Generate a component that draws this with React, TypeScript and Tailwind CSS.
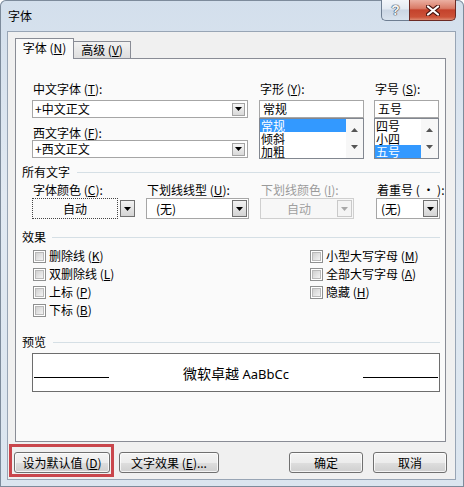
import React from "react";

const FONT = "font-['Noto_Sans_CJK_SC','Noto_Sans_CJK_JP',sans-serif]";

function M({ c }: { c: string }) {
  return (
    <>
      (<span className="underline">{c}</span>)
    </>
  );
}

function Tri({ up, color = "#000" }: { up?: boolean; color?: string }) {
  return (
    <svg width="7" height="4" viewBox="0 0 7 4">
      <path d={up ? "M0 4H7L3.5 0Z" : "M0 0H7L3.5 4Z"} fill={color} />
    </svg>
  );
}

function Label({ children, className = "" }: { children: React.ReactNode; className?: string }) {
  return (
    <div className={`h-[14px] text-[12px] leading-[14px] whitespace-nowrap pl-[1px] ${className}`}>{children}</div>
  );
}

function SmallDrop() {
  return (
    <div className="w-[13px] h-[13px] border border-[#a3a3a3] bg-[linear-gradient(to_bottom,#f6f6f6,#d9d9d9)] flex items-center justify-center">
      <Tri />
    </div>
  );
}

function FontCombo({ text, className = "" }: { text: string; className?: string }) {
  return (
    <div className={`h-[18px] w-[216px] border border-[#a6a6a6] bg-white flex items-center pl-[2px] pr-[2px] ${className}`}>
      <span className="flex-1 text-[12px] leading-[14px]">{text}</span>
      <SmallDrop />
    </div>
  );
}

function TextBox({ text, className = "" }: { text: string; className?: string }) {
  return (
    <div className={`h-[18px] border border-[#a6a6a6] bg-white flex items-center pl-[3px] text-[12px] leading-[14px] ${className}`}>
      {text}
    </div>
  );
}

function ListBox({ items, selected }: { items: string[]; selected: number }) {
  return (
    <div className="h-[41px] border border-[#828790] bg-white flex">
      <div className="flex-1 flex flex-col">
        {items.map((it, i) => (
          <div
            key={it}
            className={`h-[13px] text-[12px] leading-[13px] pl-[1px] ${i === selected ? "bg-[#3399ff] text-white" : ""}`}
          >
            {it}
          </div>
        ))}
      </div>
      <div className="w-[17px] bg-[#f7f7f7] flex flex-col items-center justify-between pt-[9px] pb-[9px]">
        <Tri up color="#555" />
        <Tri color="#555" />
      </div>
    </div>
  );
}

function BigDrop({ disabled }: { disabled?: boolean }) {
  return (
    <div
      className={`w-[15px] h-[17px] border ${
        disabled ? "border-[#c9c9c9] bg-[#f4f4f4]" : "border-[#707070] bg-[linear-gradient(to_bottom,#f2f2f2,#d4d4d4)]"
      } flex items-center justify-center`}
    >
      <Tri color={disabled ? "#a8a8a8" : "#000"} />
    </div>
  );
}

function Header({ children, gap, className = "" }: { children: React.ReactNode; gap: string; className?: string }) {
  return (
    <div className={`flex items-center h-[14px] pl-[6px] pr-[5px] ${className}`}>
      <span className="text-[12px] leading-[14px] whitespace-nowrap">{children}</span>
      <div className={`flex-1 h-px bg-[#d5dfe5] ${gap}`} />
    </div>
  );
}

function Check({ children }: { children: React.ReactNode }) {
  return (
    <div className="h-[18px] flex items-center">
      <div className="w-[13px] h-[13px] border border-[#8e8f8f] bg-white p-[1px]">
        <div className="w-full h-full border border-[#b9b9b9] bg-[linear-gradient(135deg,#d0d0d0,#f3f3f3)]" />
      </div>
      <span className="ml-[3px] text-[12px] leading-[14px] whitespace-nowrap">{children}</span>
    </div>
  );
}

function Btn({ children, className = "" }: { children: React.ReactNode; className?: string }) {
  return (
    <div
      className={`h-[21px] rounded-[3px] border border-[#707070] bg-[linear-gradient(to_bottom,#f4f4f4_0%,#ececec_50%,#dedede_51%,#cfcfcf_100%)] shadow-[inset_0_0_0_1px_rgba(255,255,255,0.75)] flex items-center justify-center text-[12px] leading-[14px] whitespace-nowrap ${className}`}
    >
      {children}
    </div>
  );
}

export default function App() {
  return (
    <div
      className={`${FONT} text-black w-[464px] h-[487px] rounded-t-[6px] bg-[linear-gradient(to_bottom,#d3dfec_0%,#e1e9f2_40%,#dbe5ef_100%)] shadow-[inset_0_0_0_1px_#7d8b9b] flex flex-col overflow-hidden`}
    >
      {/* title bar */}
      <div className="h-[31px] flex items-start">
        <span className="ml-[8px] mt-[9px] text-[12px] leading-[14px]">字体</span>
        <div className="ml-auto mr-[8px] flex">
          <div className="w-[28px] h-[21px] rounded-bl-[5px] border-l border-b border-[#6e7e92] bg-[linear-gradient(to_bottom,#f3f6fa_0%,#e3eaf2_45%,#cbd6e4_50%,#d9e3ee_100%)] flex items-center justify-center">
            <span className="text-[14px] leading-[14px] font-bold text-[#f4f4f4] [text-shadow:0_0_1px_#2e3a48,0_0_1px_#2e3a48,0_0_1px_#2e3a48] font-['Liberation_Sans',sans-serif]">
              ?
            </span>
          </div>
          <div className="w-[47px] h-[21px] rounded-br-[5px] border-l border-r border-b border-[#6b2a24] bg-[linear-gradient(to_bottom,#ebb0a2_0%,#d97a66_42%,#c4422c_50%,#cc5238_85%,#dd8a72_100%)] flex items-center justify-center">
            <svg width="14" height="11" viewBox="0 0 14 11">
              <path d="M2 1.5L12 9.5M12 1.5L2 9.5" stroke="#4a1510" strokeWidth="4.2" strokeLinecap="round" />
              <path d="M2 1.5L12 9.5M12 1.5L2 9.5" stroke="#ffffff" strokeWidth="2.2" strokeLinecap="round" />
            </svg>
          </div>
        </div>
      </div>

      {/* client area */}
      <div className="ml-[7px] w-[449px] h-[449px] border border-[#98a5b5] bg-[#f0f0f0] flex flex-col">
        {/* tabs */}
        <div className="flex items-start pl-[7px] pt-[6px] -mb-px relative z-10">
          <div className="w-[59px] h-[21px] border border-b-0 border-[#898c95] bg-[#fafafa] flex items-center justify-center text-[12px] leading-[14px] pb-[2px]">
            字体 <M c="N" />
          </div>
          <div className="mt-[3px] w-[57px] h-[17px] border border-l-0 border-b-0 border-[#898c95] bg-[linear-gradient(to_bottom,#f2f2f2,#dedede)] flex items-center justify-center text-[12px] leading-[14px]">
            高级 <M c="V" />
          </div>
        </div>

        {/* panel */}
        <div className="ml-[7px] w-[431px] h-[384px] border border-[#898c95] bg-[#fafafa] flex flex-col">
          {/* fonts */}
          <div className="flex pl-[16px] pt-[23px] h-[100px]">
            <div className="w-[216px] flex flex-col">
              <Label>
                中文字体 <M c="T" />:
              </Label>
              <FontCombo text="+中文正文" className="mt-[4px]" />
              <Label className="mt-[8px]">
                西文字体 <M c="F" />:
              </Label>
              <FontCombo text="+西文正文" />
            </div>
            <div className="ml-[11px] w-[105px] flex flex-col">
              <Label>
                字形 <M c="Y" />:
              </Label>
              <TextBox text="常规" className="mt-[4px]" />
              <ListBox items={["常规", "倾斜", "加粗"]} selected={0} />
            </div>
            <div className="ml-[10px] w-[65px] flex flex-col">
              <Label>
                字号 <M c="S" />:
              </Label>
              <TextBox text="五号" className="mt-[4px]" />
              <ListBox items={["四号", "小四", "五号"]} selected={2} />
            </div>
          </div>

          {/* all text */}
          <Header gap="ml-[7px]" className="mt-[6px]">
            所有文字
          </Header>
          <div className="flex pl-[16px] mt-[4px]">
            <div className="w-[103px] flex flex-col">
              <Label>
                字体颜色 <M c="C" />:
              </Label>
              <div className="mt-[1px] h-[21px] flex items-center">
                <div className="w-[87px] h-[21px] border border-dotted border-[#444] flex items-center justify-center text-[12px] leading-[14px]">
                  自动
                </div>
                <div className="ml-[2px]">
                  <BigDrop />
                </div>
              </div>
            </div>
            <div className="ml-[11px] w-[103px] flex flex-col">
              <Label>
                下划线线型 <M c="U" />:
              </Label>
              <div className="mt-[1px] h-[21px] border border-[#a6a6a6] bg-white flex items-center pl-[9px] pr-[1px]">
                <span className="flex-1 text-[12px] leading-[14px]">(无)</span>
                <BigDrop />
              </div>
            </div>
            <div className="ml-[11px] w-[94px] flex flex-col">
              <Label className="text-[#9a9a9a]">
                下划线颜色 <M c="I" />:
              </Label>
              <div className="mt-[1px] h-[21px] border border-[#cfcfcf] bg-[#f7f7f7] flex items-center pr-[1px]">
                <span className="flex-1 text-center text-[12px] leading-[14px] text-[#a0a0a0]">自动</span>
                <BigDrop disabled />
              </div>
            </div>
            <div className="ml-[22px] w-[64px] flex flex-col">
              <Label>着重号 ( · ):</Label>
              <div className="mt-[1px] h-[21px] border border-[#a6a6a6] bg-white flex items-center pl-[4px] pr-[1px]">
                <span className="flex-1 text-[12px] leading-[14px]">(无)</span>
                <BigDrop />
              </div>
            </div>
          </div>

          {/* effects */}
          <Header gap="ml-[6px]" className="mt-[11px]">
            效果
          </Header>
          <div className="flex pl-[17px] mt-[3px]">
            <div className="w-[277px] flex flex-col">
              <Check>
                删除线 <M c="K" />
              </Check>
              <Check>
                双删除线 <M c="L" />
              </Check>
              <Check>
                上标 <M c="P" />
              </Check>
              <Check>
                下标 <M c="B" />
              </Check>
            </div>
            <div className="flex flex-col">
              <Check>
                小型大写字母 <M c="M" />
              </Check>
              <Check>
                全部大写字母 <M c="A" />
              </Check>
              <Check>
                隐藏 <M c="H" />
              </Check>
            </div>
          </div>

          {/* preview */}
          <Header gap="ml-[7px]" className="mt-[16px]">
            预览
          </Header>
          <div className="ml-[16px] mt-[4px] w-[408px] h-[39px] border border-[#6d6d6d] bg-white flex items-start">
            <div className="ml-[1px] mt-[23px] w-[75px] h-px bg-black" />
            <div className="flex-1 mt-[9px] text-center leading-[18px] whitespace-nowrap">
              <span className="text-[14px]">微软卓越</span>
              <span className="text-[13px] font-['Noto_Sans',sans-serif]"> AaBbCc</span>
            </div>
            <div className="mr-[1px] mt-[23px] w-[75px] h-px bg-black" />
          </div>
        </div>

        {/* buttons */}
        <div className="flex items-start mt-[2px]">
          <div className="ml-[1px] w-[105px] h-[33px] border-[3px] border-[#c9464c] pt-[2px] pl-[2px]">
            <Btn className="w-[96px] mt-[3px]">
              设为默认值 <M c="D" />
            </Btn>
          </div>
          <Btn className="ml-[5px] mt-[8px] w-[100px]">
            文字效果 <M c="E" />...
          </Btn>
          <Btn className="ml-[70px] mt-[8px] w-[74px]">确定</Btn>
          <Btn className="ml-[10px] mt-[8px] w-[74px]">取消</Btn>
        </div>
      </div>
    </div>
  );
}
